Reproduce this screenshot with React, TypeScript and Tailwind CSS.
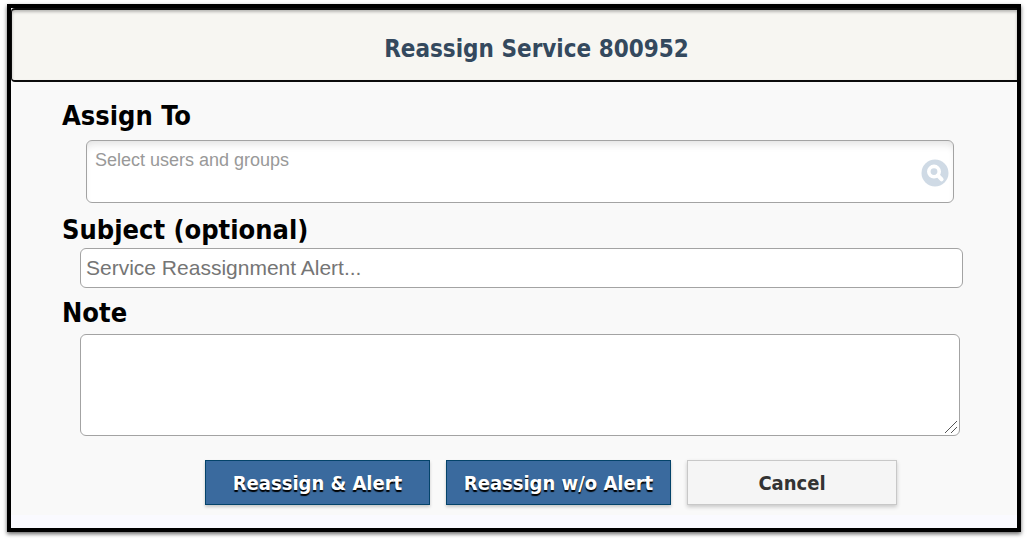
import { useState } from "react";
import type { FormEvent } from "react";

const LABEL =
  "block pl-[51px] text-[27px] leading-8 font-bold text-black";
const FIELD =
  "block w-full rounded-md border border-[#a3a3a3] bg-white font-['Liberation_Sans',Arial,sans-serif] outline-none";
const PRIMARY =
  "h-[45px] w-[225px] border border-[#04436a] bg-[#3a6a9e] text-white [text-shadow:0_2px_1px_#000] shadow-[0_2px_3px_rgba(0,0,0,0.2)]";

function SearchIcon() {
  return (
    <svg viewBox="0 0 28 28" className="size-7" aria-hidden="true">
      <circle cx="14" cy="14" r="13.5" fill="#cfdae5" />
      <circle cx="13" cy="12.6" r="5.2" fill="none" stroke="#fff" strokeWidth="3.6" />
      <path d="M16.8 16.4 L20.6 20.4" stroke="#fff" strokeWidth="4" strokeLinecap="round" />
    </svg>
  );
}

export default function App() {
  const [users, setUsers] = useState("");
  const [subject, setSubject] = useState("");
  const [note, setNote] = useState("");

  const onSubmit = (e: FormEvent) => e.preventDefault();

  return (
    <div className="bg-white pt-1 pr-1.5 pb-2 pl-[7px] font-['DejaVu_Sans_Condensed','DejaVu_Sans',sans-serif]">
      <main className="border-4 border-black bg-[#f9f9f9] shadow-[0_2px_4px_rgba(0,0,0,0.6)]">
        {/* header */}
        <header className="flex h-[74px] items-center justify-center rounded-l-sm border-y-2 border-l border-[#0c0c0c] bg-[#f7f6f2] pt-2 pl-11 shadow-[inset_0_2px_3px_rgba(0,0,0,0.25)]">
          <h1 className="text-2xl font-bold text-[#34495e]">Reassign Service 800952</h1>
        </header>

        <form onSubmit={onSubmit} className="pt-[18px]">
          <label htmlFor="assign" className={LABEL}>Assign To</label>
          <div className="relative mt-2 mr-[63px] ml-[75px]">
            <textarea
              id="assign"
              value={users}
              onChange={(e) => setUsers(e.target.value)}
              placeholder="Select users and groups"
              className={`${FIELD} h-[63px] resize-none pt-2 pr-10 pl-2 text-lg leading-[22px] shadow-[inset_0_7px_8px_-4px_rgba(0,0,0,0.12)] placeholder:text-[#999]`}
            />
            <button type="button" aria-label="Search users and groups" className="absolute top-[19px] right-[5px]">
              <SearchIcon />
            </button>
          </div>

          <label htmlFor="subject" className={`${LABEL} mt-[11px]`}>Subject (optional)</label>
          <div className="mt-0.5 mr-[54px] ml-[69px]">
            <input
              id="subject"
              type="text"
              value={subject}
              onChange={(e) => setSubject(e.target.value)}
              placeholder="Service Reassignment Alert..."
              className={`${FIELD} h-10 px-[5px] text-[21px] placeholder:text-[#757575]`}
            />
          </div>

          <label htmlFor="note" className={`${LABEL} mt-[9px]`}>Note</label>
          <div className="relative mt-[5px] mr-[57px] ml-[69px]">
            <textarea
              id="note"
              value={note}
              onChange={(e) => setNote(e.target.value)}
              className={`${FIELD} h-[102px] resize-none p-[5px] text-[21px]`}
            />
            {/* resize grip */}
            <svg viewBox="0 0 14 14" className="pointer-events-none absolute right-0.5 bottom-0.5 size-3.5" aria-hidden="true">
              <path d="M1 13 L13 1 M7 13 L13 7" stroke="#555" strokeWidth="1" />
            </svg>
          </div>

          <div className="mt-6 mb-2.5 flex justify-center gap-4 pl-[74px] text-xl font-bold">
            <button type="submit" className={PRIMARY}>Reassign &amp; Alert</button>
            <button type="button" className={PRIMARY}>Reassign w/o Alert</button>
            <button
              type="button"
              className="h-[45px] w-[210px] border border-[#c8c8c8] bg-[#f5f5f5] text-[#333] shadow-[0_2px_4px_rgba(0,0,0,0.2)]"
            >
              Cancel
            </button>
          </div>
        </form>

        <div className="h-[13px] bg-[#fafaff]" />
      </main>
    </div>
  );
}
